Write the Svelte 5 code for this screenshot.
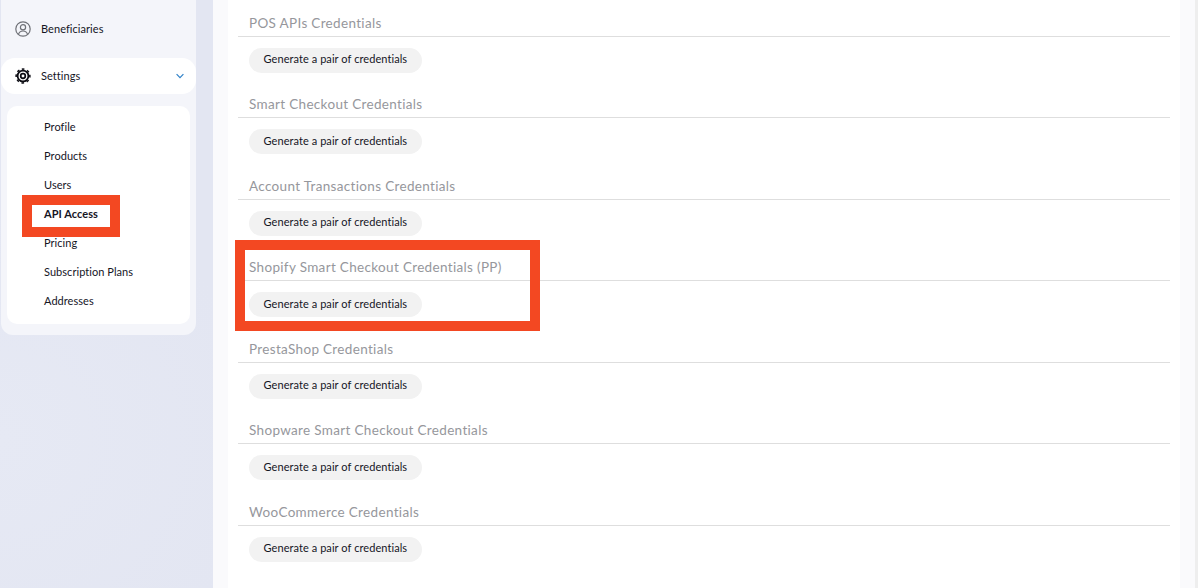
<script>
  const subItems = ["Profile", "Products", "Users", "API Access", "Pricing", "Subscription Plans", "Addresses"];
  const sections = [
    "POS APIs Credentials",
    "Smart Checkout Credentials",
    "Account Transactions Credentials",
    "Shopify Smart Checkout Credentials (PP)",
    "PrestaShop Credentials",
    "Shopware Smart Checkout Credentials",
    "WooCommerce Credentials",
  ];
</script>

<div class="page">
  <aside class="sidebar">
    <div class="menu">
      <div class="row">
        <svg class="icon" viewBox="0 0 16 16" fill="none" stroke="#6f7177" stroke-width="1.2">
          <circle cx="8" cy="8" r="7.2" />
          <circle cx="8" cy="6.3" r="2.6" />
          <path d="M3.4 13.4c.7-2.3 2.5-3.4 4.6-3.400s3.900 1.100 4.600 3.400" />
        </svg>
        <span>Beneficiaries</span>
      </div>
      <div class="row active">
        <svg class="icon" viewBox="0 0 16 16" fill="none" stroke="#0b0b12">
          <circle cx="8" cy="8" r="5.4" stroke-width="1.8" />
          <circle cx="8" cy="8" r="6.9" stroke-width="1.5" stroke-dasharray="2.6 2.82" transform="rotate(-100 8 8)" />
          <circle cx="8" cy="8" r="2.3" stroke-width="1.7" />
        </svg>
        <span>Settings</span>
        <svg class="chevron" viewBox="0 0 8 6" fill="none" stroke="#2f80c8" stroke-width="1.2">
          <path d="M.6 1.200 4 4.600l3.400-3.400" />
        </svg>
      </div>
      <div class="submenu">
        {#each subItems as item}
          <div class="subitem" class:current={item === "API Access"}>{item}</div>
        {/each}
        <div class="mark mark-nav"></div>
      </div>
    </div>
  </aside>

  <main class="content">
    <div class="panel">
      {#each sections as title}
        <section class="section">
          <h3>{title}</h3>
          <button>Generate a pair of credentials</button>
        </section>
      {/each}
      <div class="mark mark-section"></div>
    </div>
  </main>
  <div class="scrollbar"></div>
</div>

<style>
  :global(body) {
    margin: 0;
    overflow: hidden;
  }

  .page {
    display: flex;
    height: 588px;
    width: 1198px;
    overflow: hidden;
    font-family: Lato, "Open Sans", sans-serif;
    background: #fafafc;
  }

  .sidebar {
    width: 213px;
    flex: none;
    box-sizing: border-box;
    padding-left: 1px;
    background: radial-gradient(circle at 0 440px, #e6e9f4 0, #e3e6f2 260px);
  }

  .menu {
    width: 195px;
    height: 335px;
    box-sizing: border-box;
    padding-top: 11px;
    background: #f4f5fa;
    border-radius: 0 0 12px 12px;
  }

  .row {
    display: flex;
    align-items: center;
    height: 36px;
    padding-left: 14px;
    font-size: 11px;
    letter-spacing: 0.05px;
    color: #15151f;
    border-radius: 14px;
  }

  .row span {
    margin-bottom: 2px;
  }

  .row.active {
    margin-top: 11px;
    background: #fff;
  }

  .icon {
    width: 16px;
    height: 16px;
    margin-right: 10px;
  }

  .chevron {
    width: 8px;
    height: 6px;
    margin-left: auto;
    margin-right: 12px;
  }

  .submenu {
    position: relative;
    box-sizing: border-box;
    height: 218px;
    margin: 12px 6px 0;
    padding-top: 7px;
    background: #fff;
    border-radius: 10px;
  }

  .subitem {
    height: 29px;
    line-height: 27px;
    padding-left: 37px;
    font-size: 11px;
    letter-spacing: 0.05px;
    color: #15151f;
  }

  .subitem.current {
    font-weight: 700;
  }

  .mark {
    position: absolute;
    box-sizing: border-box;
    border: 10px solid #f34822;
  }

  .mark-nav {
    left: 15px;
    top: 89px;
    width: 98px;
    height: 42px;
  }

  .content {
    flex: 1;
    box-sizing: border-box;
    padding: 0 15px;
  }

  .panel {
    position: relative;
    height: 588px;
    background: #fff;
    padding: 0 10px;
  }

  .section {
    height: 81.5px;
    box-sizing: border-box;
    padding-top: 13.75px;
  }

  .section h3 {
    margin: 0 0 11px;
    height: 22.75px;
    line-height: 18px;
    box-sizing: border-box;
    padding-left: 11px;
    font-size: 13.5px;
    font-weight: 400;
    letter-spacing: 0.33px;
    color: #96979c;
    border-bottom: 1px solid #dedede;
  }

  .section button {
    display: block;
    height: 25px;
    margin-left: 11px;
    padding: 0 14.5px 2.5px;
    border: 0;
    border-radius: 13px;
    background: #f2f2f2;
    font-family: inherit;
    font-size: 11px;
    letter-spacing: 0.07px;
    color: #15151f;
  }

  .mark-section {
    left: 7px;
    top: 240px;
    width: 305px;
    height: 91px;
  }

  .scrollbar {
    width: 3px;
    flex: none;
    background: #eeeeee;
  }
</style>
